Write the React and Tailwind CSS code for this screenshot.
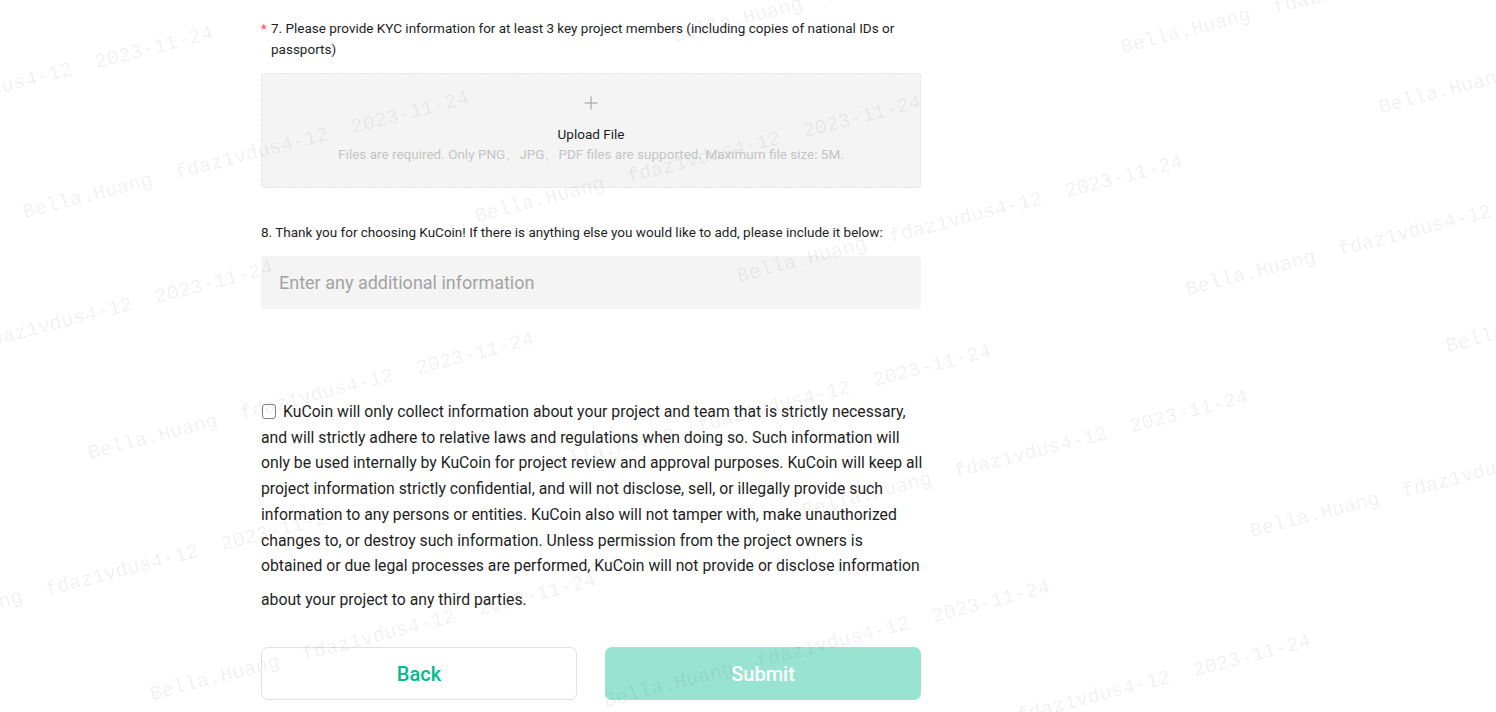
import { useState } from 'react';

// watermark start points (left end of the baseline), measured from the page
const MARKS = [
  [676, 47], [1124, 58], [1382, 118], [-230, 158], [26, 223], [478, 227],
  [740, 287], [1189, 300], [1449, 357], [-170, 393], [91, 464], [548, 476],
  [805, 522], [1253, 542], [-104, 640], [153, 705], [607, 712], [868, 766],
];

const WATERMARK = 'Bella.Huang  fdaz1vdus4-12  2023-11-24';

const CONSENT_LINES = [
  'and will strictly adhere to relative laws and regulations when doing so. Such information will',
  'only be used internally by KuCoin for project review and approval purposes. KuCoin will keep all',
  'project information strictly confidential, and will not disclose, sell, or illegally provide such',
  'information to any persons or entities. KuCoin also will not tamper with, make unauthorized',
  'changes to, or destroy such information. Unless permission from the project owners is',
  'obtained or due legal processes are performed, KuCoin will not provide or disclose information',
];

function Watermark() {
  return (
    <div className="absolute inset-0 pointer-events-none overflow-hidden">
      {MARKS.map(([x, y], i) => (
        <span
          key={i}
          className="absolute whitespace-pre font-['Liberation_Mono',monospace] text-[20px] leading-none tracking-[0.1px] text-black/[0.065] origin-[0_100%] -rotate-[14.5deg]"
          style={{ left: x, top: y - 20 }}
        >
          {WATERMARK}
        </span>
      ))}
    </div>
  );
}

function App() {
  const [agreed, setAgreed] = useState(false);
  const [note, setNote] = useState('');

  return (
    <div className="relative w-[1496px] h-[712px] overflow-hidden bg-white font-['Roboto',sans-serif] text-[#1e1e1e]">
      <div className="ml-[261px] w-[660px] pt-[18px]">
        {/* question 7 */}
        <div className="flex text-[13.5px] leading-[21px]">
          <span className="w-[10px] shrink-0 text-[#f65656] text-[13px]">*</span>
          <p>
            7. Please provide KYC information for at least 3 key project members (including copies of national IDs or
            passports)
          </p>
        </div>

        <div className="mt-[13px] h-[115px] rounded-[4px] border border-dashed border-[#e4e4e4] bg-[#f4f4f4] flex flex-col items-center pt-[21px]">
          <svg width="16" height="16" viewBox="0 0 16 16" className="text-[#9a9a9a]">
            <path d="M8 1.5v13M1.5 8h13" stroke="currentColor" strokeWidth="1" fill="none" />
          </svg>
          <div className="mt-[13px] text-[13.5px] leading-[20px]">Upload File</div>
          <div className="text-[13.5px] leading-[20px] text-[#c4c4c4]">
            Files are required. Only PNG、JPG、PDF files are supported. Maximum file size: 5M.
          </div>
        </div>

        {/* question 8 */}
        <p className="mt-[34px] text-[13.5px] leading-[21px]">
          8. Thank you for choosing KuCoin! If there is anything else you would like to add, please include it below:
        </p>
        <input
          value={note}
          onChange={(e) => setNote(e.target.value)}
          placeholder="Enter any additional information"
          className="mt-[13px] block w-full h-[53px] rounded-[4px] bg-[#f4f4f4] px-[18px] text-[18px] outline-none placeholder:text-[#a3a3a3]"
        />

        {/* consent */}
        <div className="mt-[90px] text-[15.75px] leading-[25.7px] whitespace-nowrap">
          <div className="flex items-center">
            <button
              type="button"
              onClick={() => setAgreed(!agreed)}
              className={`mr-[7px] ml-px w-[14px] h-[15px] rounded-[3px] border ${agreed ? 'border-[#01bc8d] bg-[#01bc8d]' : 'border-[#7f7f7f] bg-white'}`}
            />
            <span>KuCoin will only collect information about your project and team that is strictly necessary,</span>
          </div>
          {CONSENT_LINES.map((line) => (
            <div key={line}>{line}</div>
          ))}
          <div className="mt-[8px]">about your project to any third parties.</div>
        </div>

        <div className="mt-[34px] flex gap-[28px]">
          <button className="w-[316px] h-[53px] rounded-[7px] border border-[#e1e1e1] bg-white pt-px text-[20px] font-medium text-[#01bc8d]">
            Back
          </button>
          <button
            disabled={!agreed}
            className="w-[316px] h-[53px] rounded-[7px] bg-[#99e4d1] pt-px text-[20px] font-medium text-white"
          >
            Submit
          </button>
        </div>
      </div>

      <Watermark />
    </div>
  );
}

export default App;
